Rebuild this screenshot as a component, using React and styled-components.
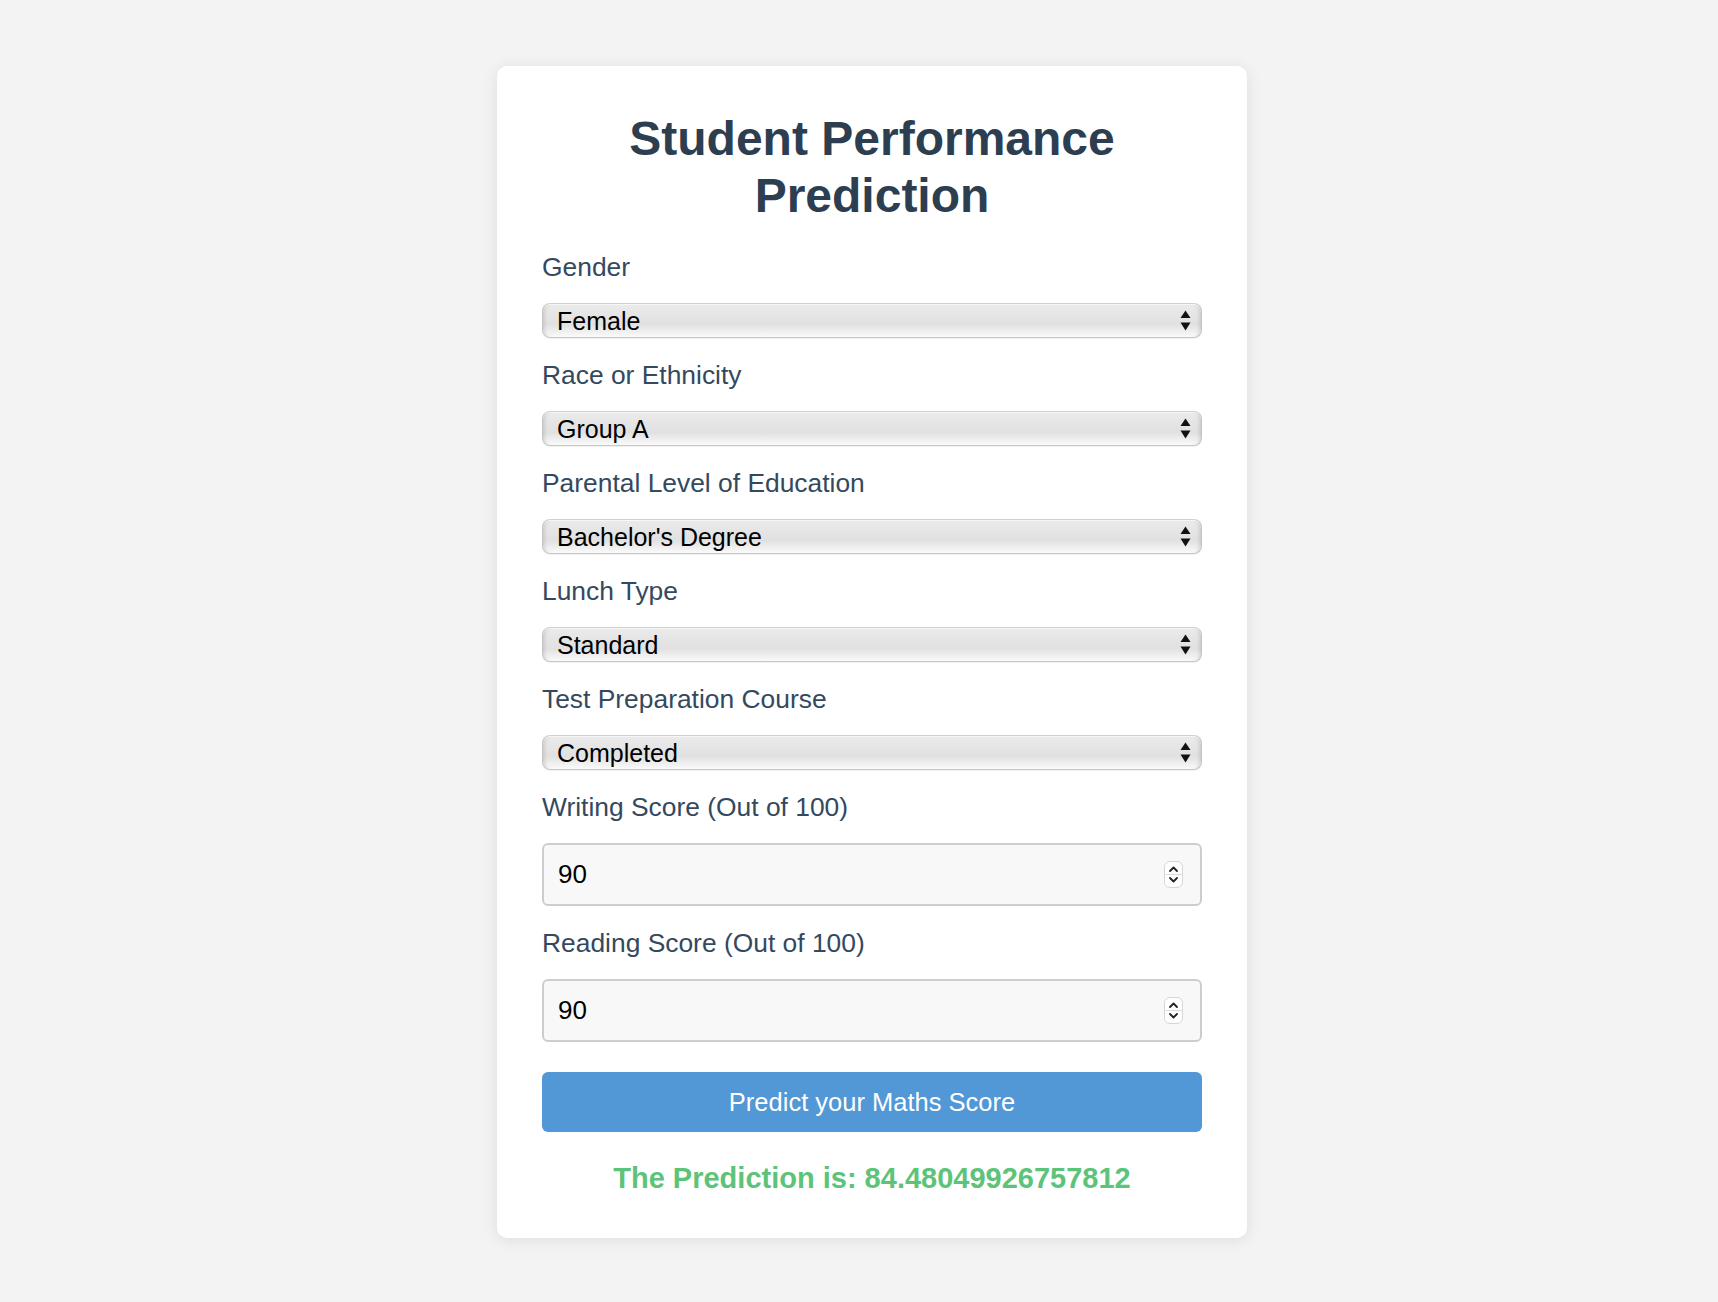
import React from 'react';
import styled, { createGlobalStyle } from 'styled-components';

const GlobalStyle = createGlobalStyle`
  html, body {
    margin: 0;
    padding: 0;
    background: #f3f3f3;
  }
  body {
    font-family: "Liberation Sans", Arial, Helvetica, sans-serif;
  }
  * { box-sizing: border-box; }
`;

const FONT = `"Liberation Sans", Arial, Helvetica, sans-serif`;

const Page = styled.div`
  min-height: 1302px;
  display: flex;
  justify-content: center;
  align-items: flex-start;
  padding: 66px 0 40px 26px;
`;

const Card = styled.div`
  width: 750px;
  background: #ffffff;
  border-radius: 10px;
  box-shadow: 0 2px 16px rgba(0, 0, 0, 0.09);
  padding: 44px 45px 44px;
`;

const Title = styled.h1`
  margin: 0 0 28px;
  text-align: center;
  font-family: ${FONT};
  font-size: 48px;
  line-height: 57px;
  font-weight: 700;
  color: #2c3e50;
`;

const Form = styled.form`
  display: flex;
  flex-direction: column;
`;

const Group = styled.div`
  margin-bottom: 22px;
`;

const Label = styled.label`
  display: block;
  font-family: ${FONT};
  font-size: 26.4px;
  line-height: 30px;
  color: #34495e;
  margin-bottom: 21px;
`;

const SelectShell = styled.div`
  display: flex;
  align-items: center;
  height: 35px;
  border-radius: 8px;
  border: 1px solid #c6c6c6;
  border-top-color: #d0d0d0;
  background: linear-gradient(
    to bottom,
    #ebebeb 0%,
    #e4e4e4 40%,
    #e1e1e1 62%,
    #ededed 80%,
    #fafafa 100%
  );
  box-shadow: inset 0 1px 0 rgba(255, 255, 255, 0.6),
    inset 5px 0 4px -4px rgba(0, 0, 0, 0.16),
    inset -5px 0 4px -4px rgba(0, 0, 0, 0.16),
    0 1px 1px rgba(0, 0, 0, 0.06);
  padding-right: 10px;
`;

const Select = styled.select`
  flex: 1;
  height: 100%;
  appearance: none;
  -webkit-appearance: none;
  border: none;
  outline: none;
  background: transparent;
  font-family: ${FONT};
  font-size: 25px;
  color: #000;
  padding: 0 0 0 14px;
`;

const NumberShell = styled.div`
  display: flex;
  align-items: center;
  height: 63px;
  border: 2px solid #cdcdcd;
  border-radius: 6px;
  background: #f8f8f8;
  padding: 0 17px 0 14px;
`;

const NumberInput = styled.input`
  flex: 1;
  min-width: 0;
  border: none;
  outline: none;
  background: transparent;
  font-family: ${FONT};
  font-size: 26px;
  color: #000;
  padding: 0;
  -moz-appearance: textfield;
  &::-webkit-outer-spin-button,
  &::-webkit-inner-spin-button {
    -webkit-appearance: none;
    margin: 0;
  }
`;

const Button = styled.button`
  margin-top: 8px;
  height: 60px;
  width: 100%;
  border: none;
  border-radius: 6px;
  background: #5297d6;
  color: #ffffff;
  font-family: ${FONT};
  font-size: 25.5px;
  cursor: pointer;
`;

const Result = styled.div`
  margin-top: 30px;
  text-align: center;
  font-family: ${FONT};
  font-size: 29px;
  line-height: 32px;
  font-weight: 700;
  color: #5cc478;
`;

const SelectArrows = () => (
  <svg width="11" height="21" viewBox="0 0 11 21" style={{ flexShrink: 0 }}>
    <path d="M5.5 0.5 L10.5 8 L0.5 8 Z" fill="#111" />
    <path d="M5.5 20.5 L10.5 12.5 L0.5 12.5 Z" fill="#111" />
  </svg>
);

const Spinner = () => (
  <svg width="19" height="27" viewBox="0 0 19 27" style={{ flexShrink: 0 }}>
    <rect x="0.5" y="0.5" width="18" height="26" rx="5.5" fill="#ffffff" stroke="#d6d6d6" />
    <line x1="1" y1="13.5" x2="18" y2="13.5" stroke="#dedede" />
    <path d="M6 10 L9.5 6.5 L13 10" stroke="#222" strokeWidth="1.8" fill="none" strokeLinecap="round" strokeLinejoin="round" />
    <path d="M6 17 L9.5 20.5 L13 17" stroke="#222" strokeWidth="1.8" fill="none" strokeLinecap="round" strokeLinejoin="round" />
  </svg>
);

const selects = [
  { id: 'gender', label: 'Gender', options: ['Female', 'Male'] },
  { id: 'race', label: 'Race or Ethnicity', options: ['Group A', 'Group B', 'Group C', 'Group D', 'Group E'] },
  {
    id: 'parent',
    label: 'Parental Level of Education',
    options: ["Bachelor's Degree", "Associate's Degree", 'High School', "Master's Degree", 'Some College', 'Some High School'],
  },
  { id: 'lunch', label: 'Lunch Type', options: ['Standard', 'Free/Reduced'] },
  { id: 'prep', label: 'Test Preparation Course', options: ['Completed', 'None'] },
];

const numbers = [
  { id: 'writing', label: 'Writing Score (Out of 100)', value: 90 },
  { id: 'reading', label: 'Reading Score (Out of 100)', value: 90 },
];

export default function App() {
  return (
    <>
      <GlobalStyle />
      <Page>
        <Card>
          <Title>Student Performance Prediction</Title>
          <Form onSubmit={(e) => e.preventDefault()}>
            {selects.map((s) => (
              <Group key={s.id}>
                <Label htmlFor={s.id}>{s.label}</Label>
                <SelectShell>
                  <Select id={s.id} defaultValue={s.options[0]}>
                    {s.options.map((o) => (
                      <option key={o} value={o}>{o}</option>
                    ))}
                  </Select>
                  <SelectArrows />
                </SelectShell>
              </Group>
            ))}
            {numbers.map((n) => (
              <Group key={n.id}>
                <Label htmlFor={n.id}>{n.label}</Label>
                <NumberShell>
                  <NumberInput id={n.id} type="number" min="0" max="100" defaultValue={n.value} />
                  <Spinner />
                </NumberShell>
              </Group>
            ))}
            <Button type="submit">Predict your Maths Score</Button>
          </Form>
          <Result>The Prediction is: 84.48049926757812</Result>
        </Card>
      </Page>
    </>
  );
}
